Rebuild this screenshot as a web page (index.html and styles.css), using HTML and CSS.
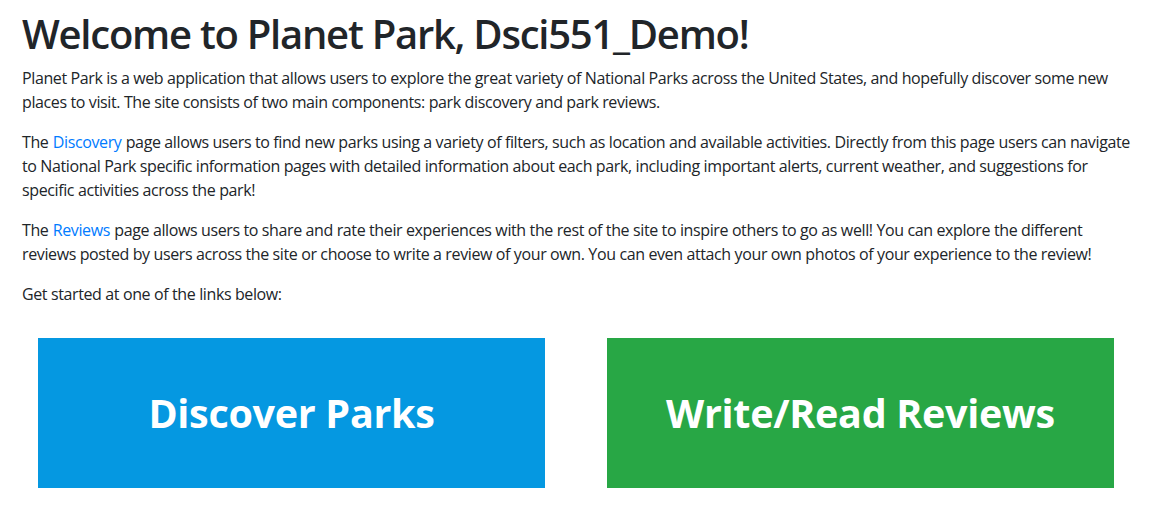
FILE: index.html
```html
<!DOCTYPE html>
<html lang="en">
<head>
<meta charset="utf-8">
<title>Planet Park</title>
<link rel="stylesheet" href="styles.css">
</head>
<body>
<main class="home">
  <h1 class="home-title">Welcome to Planet Park, Dsci551_Demo!</h1>
  <p class="home-text">Planet Park is a web application that allows users to explore the great variety of National Parks across the United States, and hopefully discover some new places to visit. The site consists of two main components: park discovery and park reviews.</p>
  <p class="home-text">The <a class="home-link" href="#">Discovery</a> page allows users to find new parks using a variety of filters, such as location and available activities. Directly from this page users can navigate to National Park specific information pages with detailed information about each park, including important alerts, current weather, and suggestions for specific activities across the park!</p>
  <p class="home-text">The <a class="home-link" href="#">Reviews</a> page allows users to share and rate their experiences with the rest of the site to inspire others to go as well! You can explore the different reviews posted by users across the site or choose to write a review of your own. You can even attach your own photos of your experience to the review!</p>
  <p class="home-text">Get started at one of the links below:</p>
  <div class="tiles">
    <a class="tile tile-blue" href="#">Discover Parks</a>
    <a class="tile tile-green" href="#">Write/Read Reviews</a>
  </div>
</main>
</body>
</html>
```
FILE: styles.css
```css
html, body {
  margin: 0;
  padding: 0;
  background: #ffffff;
}
body {
  font-family: "Open Sans", "Noto Sans", sans-serif;
  color: #212529;
  font-size: 16px;
  line-height: 24px;
}
.home {
  padding: 10px 24px 0 22px;
}
.home-title {
  margin: 0 0 8px 0;
  font-size: 40px;
  line-height: 48px;
  font-weight: 600;
  letter-spacing: -1.25px;
}
.home-text {
  margin: 0 0 16px 0;
  letter-spacing: -0.38px;
}
.home-link {
  color: #007bff;
  text-decoration: none;
  margin: 0 0.5px;
}
.tiles {
  display: flex;
  gap: 62px;
  padding: 16px 0 0 16px;
}
.tile {
  width: 507px;
  height: 150px;
  display: flex;
  align-items: center;
  justify-content: center;
  color: #ffffff;
  text-decoration: none;
  font-size: 39.5px;
  font-weight: 700;
  letter-spacing: -0.3px;
}
.tile-blue {
  background: #0598e1;
}
.tile-green {
  background: #28a745;
}
```
